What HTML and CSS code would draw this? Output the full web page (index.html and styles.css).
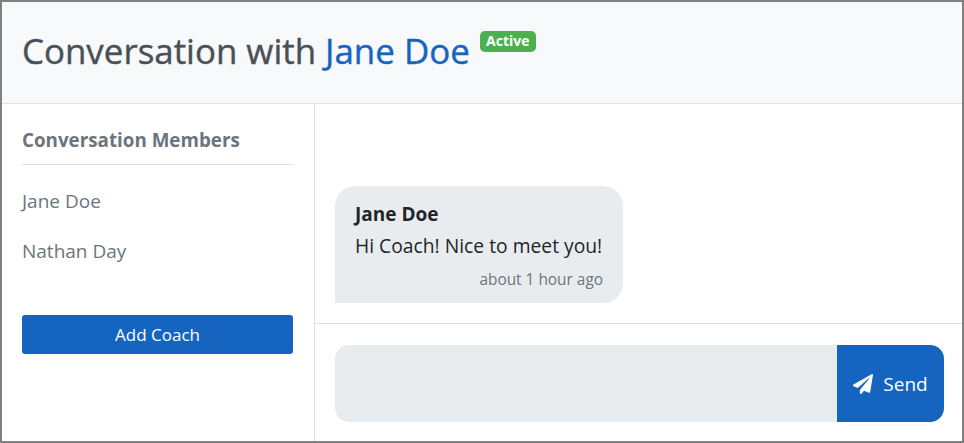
FILE: index.html
```html
<!DOCTYPE html>
<html lang="en">
<head>
<meta charset="utf-8">
<title>Conversation</title>
<link rel="stylesheet" href="styles.css">
</head>
<body>
<div class="frame">
  <header class="header">
    <h1 class="title">Conversation with <a class="name">Jane Doe</a></h1>
    <span class="badge">Active</span>
  </header>
  <div class="body">
    <aside class="side">
      <h2 class="side-title">Conversation Members</h2>
      <ul class="members">
        <li>Jane Doe</li>
        <li>Nathan Day</li>
      </ul>
      <button class="add">Add Coach</button>
    </aside>
    <main class="chat">
      <div class="messages">
        <div class="bubble">
          <div class="author">Jane Doe</div>
          <div class="text">Hi Coach! Nice to meet you!</div>
          <div class="time">about 1 hour ago</div>
        </div>
      </div>
      <form class="composer">
        <div class="input"></div>
        <button class="send" type="button">
          <svg class="plane" viewBox="0 0 512 512"><path fill="currentColor" d="M476 3.2L12.5 270.6c-18.1 10.4-15.8 35.6 2.2 43.2L121 358.4l287.3-253.2c5.5-4.9 13.3 2.6 8.6 8.3L176 407v80.5c0 23.6 28.5 32.9 42.5 15.8L282 426l124.6 52.2c14.2 6 30.4-2.9 33-18.2l72-432C515 7.8 493.3-6.8 476 3.2z"/></svg>
          Send
        </button>
      </form>
    </main>
  </div>
</div>
</body>
</html>
```
FILE: styles.css
```css
* { box-sizing: border-box; }
html, body { margin: 0; padding: 0; }
body { font-family: "Open Sans", "Noto Sans", sans-serif; color: #212529; background: #fff; }
.frame { width: 964px; height: 443px; border: 2px solid #808080; display: flex; flex-direction: column; overflow: hidden; }
.header { height: 102px; flex: none; background: #f8f9fa; border-bottom: 1px solid #dee2e6; display: flex; align-items: flex-start; padding: 0 20px; }
.title { margin: 26px 0 0; font-size: 34.9px; line-height: 46px; font-weight: 400; color: #495057; white-space: nowrap; -webkit-text-stroke: 0.4px currentColor; }
.name { color: #1565c0; }
.badge { margin: 29px 0 0 10px; width: 56px; height: 21px; text-align: center; background: #4caf50; color: #fff; font-size: 14px; line-height: 20px; font-weight: 700; border-radius: 5px; }
.body { flex: 1; display: flex; min-height: 0; }
.side { width: 313px; flex: none; border-right: 1px solid #dee2e6; padding: 20px 20px 0; }
.side-title { margin: 0; font-size: 18.8px; line-height: 33px; font-weight: 700; color: #6c757d; padding-bottom: 7px; border-bottom: 1px solid #dee2e6; }
.members { list-style: none; margin: 11px 0 0; padding: 0; font-size: 19px; color: #6c757d; }
.members li { height: 50px; line-height: 50px; }
.add { display: block; width: 271px; height: 39px; margin-top: 39px; border: 0; border-radius: 3px; background: #1565c0; color: #fff; font: 400 17px "Open Sans", sans-serif; }
.chat { flex: 1; display: flex; flex-direction: column; min-width: 0; }
.messages { height: 220px; flex: none; border-bottom: 1px solid #dee2e6; padding: 82px 20px 20px; }
.bubble { width: 288px; height: 117px; background: #e9ecef; border-radius: 20px 20px 20px 0; padding: 15px 20px 0; }
.author { font-size: 19px; line-height: 26px; font-weight: 700; }
.text { font-size: 19.3px; line-height: 26px; margin-top: 6px; white-space: nowrap; }
.time { font-size: 15.4px; line-height: 20px; margin-top: 11px; color: #6c757d; text-align: right; white-space: nowrap; }
.composer { display: flex; margin: 21px 18px 0 20px; height: 77px; }
.input { flex: 1; background: #e9ecef; border-radius: 14px 0 0 14px; }
.send { width: 107px; flex: none; display: flex; align-items: center; justify-content: center; gap: 10px; border: 0; background: #1565c0; color: #fff; border-radius: 0 14px 14px 0; font: 400 19px "Open Sans", sans-serif; }
.plane { width: 20px; height: 20px; }
```
